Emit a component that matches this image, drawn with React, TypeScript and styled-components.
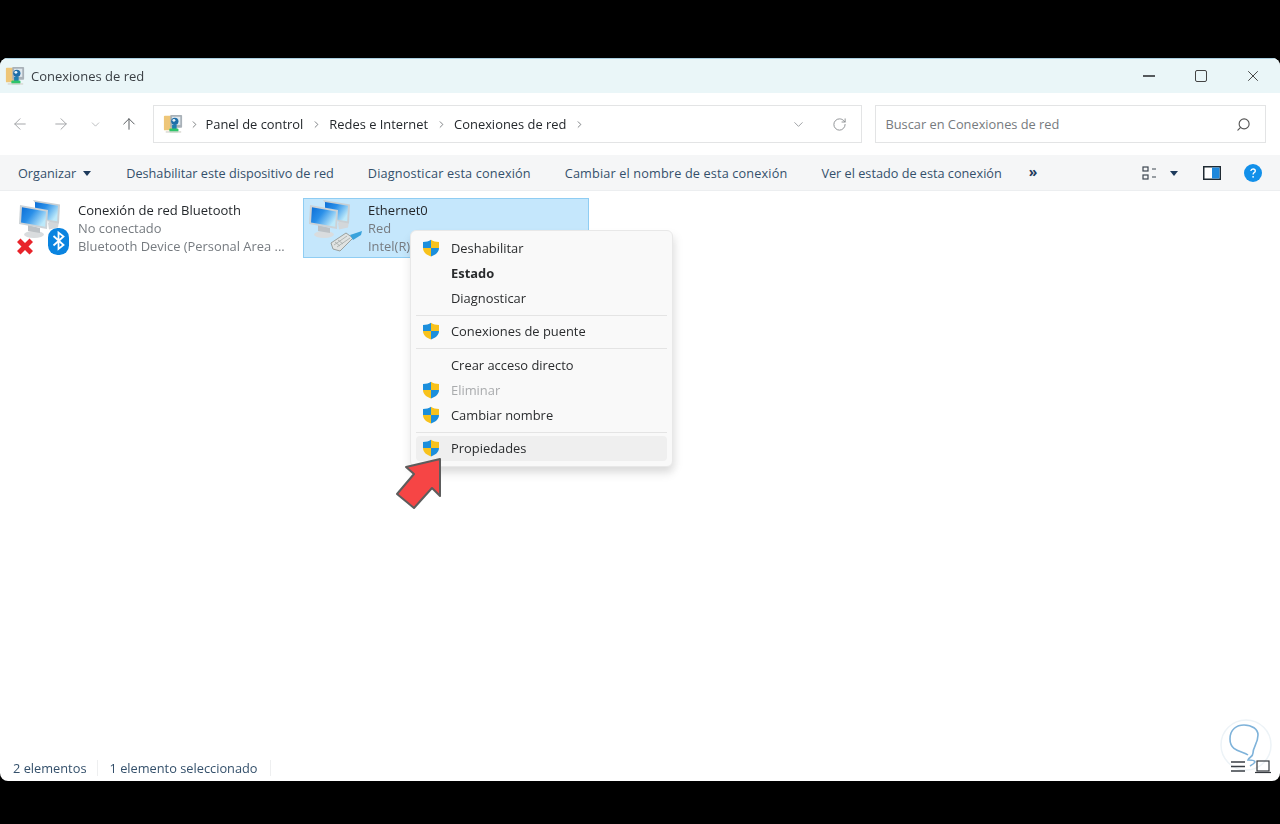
import React from "react";
import styled, { createGlobalStyle } from "styled-components";
import { ArrowLeft, ArrowRight, ArrowUp, ChevronDown, ChevronRight, RotateCw, Search, X } from "lucide-react";

const GlobalStyle = createGlobalStyle`
  html, body {
    margin: 0;
    background: #000;
  }
  * { box-sizing: border-box; }
`;

const FONT = `"Open Sans", "Noto Sans", "Liberation Sans", sans-serif`;

const ControlPanelIcon = () => (
  <svg width="20" height="20" viewBox="0 0 22 22">
    <rect x="1" y="2" width="10" height="16" rx="1" fill="#eec678" />
    <rect x="8" y="1" width="13" height="14" rx="1" fill="#a9b1b8" />
    <rect x="10" y="3" width="9" height="9" fill="#dfe8ee" />
    <circle cx="13" cy="8" r="4" fill="#1f6ea8" />
    <circle cx="12" cy="7" r="1.6" fill="#e8f3fa" />
    <rect x="10" y="12" width="5" height="5" fill="#1e7fb0" />
    <rect x="7" y="16" width="10" height="4" rx="1" fill="#2fc46a" />
    <rect x="3" y="19" width="17" height="1.5" fill="#d6d6d0" />
  </svg>
);

const Shield = () => (
  <svg width="18" height="18" viewBox="0 0 18 18">
    <defs>
      <clipPath id="shield-clip">
        <path d="M9 .8C11 2.4 14 3 17 3v6c0 4-3.4 6.9-8 8.4C4.400 15.900 1 13 1 9V3c3 0 6-.6 8-2.200z" />
      </clipPath>
    </defs>
    <g clipPath="url(#shield-clip)">
      <rect x="0" y="0" width="9" height="9" fill="#1c8fdc" />
      <rect x="9" y="0" width="9" height="9" fill="#f8c21c" />
      <rect x="0" y="9" width="9" height="9" fill="#f8c21c" />
      <rect x="9" y="9" width="9" height="9" fill="#1c8fdc" />
    </g>
  </svg>
);

// two monitors shared by both connection icons
const Monitors = () => (
  <>
    <defs>
      <linearGradient id="screen-grad" x1="0" y1="0" x2="1" y2="0.6">
        <stop offset="0" stopColor="#0b6ed6" />
        <stop offset="0.45" stopColor="#2a8fe8" />
        <stop offset="1" stopColor="#bde9fa" />
      </linearGradient>
    </defs>
    <path d="M34 24l3-3 8 1.500-1 6-9 2z" fill="#d3d7da" />
    <path d="M19 1l27 4.500-1 19-11-2z" fill="#c9cfd3" />
    <path d="M21 3l23 3.800-.8 15.400-22.200-3.500z" fill="url(#screen-grad)" />
    <ellipse cx="20" cy="35.500" rx="10" ry="3.500" fill="#d9dcde" />
    <path d="M14 26l12 3v5l-12-2z" fill="#bcc1c5" />
    <path d="M6 6l28 5-1 19L5 25z" fill="#ccd2d6" />
    <path d="M8 8.300l24 4.300-.8 15.200L7 23.500z" fill="url(#screen-grad)" />
  </>
);

const BluetoothNetIcon = () => (
  <svg width="60" height="60" viewBox="0 0 60 60">
    <Monitors />
    <path d="M3 43l3.500-3.500 4.500 4.500 4.500-4.500L19 43l-4.500 4.500L19 52l-3.500 3.500-4.500-4.500-4.500 4.500L3 52l4.500-4.500z" fill="#e8232a" />
    <rect x="34" y="29" width="21" height="27" rx="9.500" fill="#0a84e0" />
    <path d="M39.500 37l10 9-5 4V33.500l5 4-10 9" fill="none" stroke="#fff" strokeWidth="1.800" />
  </svg>
);

const EthernetNetIcon = () => (
  <svg width="60" height="60" viewBox="0 0 60 60">
    <Monitors />
    <path d="M27 44l15-10 7 5-13 13-7-2z" fill="#e0e3e2" stroke="#9aa09e" strokeWidth="1" />
    <path d="M30 46l13-9M33 48l13-9M34 41l5 4M31 43l5 4" stroke="#a3a9a7" strokeWidth=".8" />
    <path d="M46 36l12-4-1 4-8 5z" fill="#3aa3dc" />
  </svg>
);

const ViewIcon = () => (
  <svg width="16" height="16" viewBox="0 0 16 16" fill="none" stroke="#3d4650" strokeWidth="1.200">
    <rect x="1" y="2" width="5" height="4" />
    <rect x="1" y="10" width="5" height="4" />
    <path d="M10 4h4M10 12h4" />
  </svg>
);

const PaneIcon = () => (
  <svg width="18" height="14" viewBox="0 0 18 14">
    <rect x=".75" y=".75" width="16.500" height="12.500" fill="#fff" stroke="#1f2a33" strokeWidth="1.500" />
    <rect x="9" y="1.500" width="7.500" height="11" fill="#1e88dc" />
  </svg>
);

const HelpIcon = () => (
  <svg width="18" height="18" viewBox="0 0 18 18">
    <circle cx="9" cy="9" r="9" fill="#1290ea" />
    <path d="M6.800 7c.2-1.300 1.100-2 2.300-2 1.300 0 2.200.8 2.200 1.900 0 1.700-2.200 1.700-2.200 3.500" fill="none" stroke="#fff" strokeWidth="1.300" />
    <circle cx="9.100" cy="12.800" r=".9" fill="#fff" />
  </svg>
);

const MenuArrow = () => (
  <svg width="50" height="56" viewBox="0 0 50 56">
    <path
      d="M46 3L12 11l8 7L3 38l17 14 18-20 8 8z"
      fill="#f64545"
      stroke="#5d5d5d"
      strokeWidth="2"
      strokeLinejoin="round"
    />
  </svg>
);

const Watermark = () => (
  <svg width="60" height="62" viewBox="0 0 60 62" fill="none">
    <circle cx="27" cy="26" r="25" stroke="#edf3f7" strokeWidth="1.500" />
    <path
      d="M29 36C24 32 11 33 11 20C11 10 18 6 25 6C33 6 39 10 39 16C39 24 34 28 34 34C34 38 30 38 29 41C32 41 36 41 36 43C35 45 33 46 31 47"
      stroke="#7fb3da"
      strokeWidth="1.600"
    />
  </svg>
);

const LinesIcon = () => (
  <svg width="15" height="14" viewBox="0 0 15 14" stroke="#3a3f45" strokeWidth="1.300">
    <path d="M0 2h14M0 6.500h14M0 11h14" />
  </svg>
);

const TilesIcon = () => (
  <svg width="16" height="14" viewBox="0 0 16 14" fill="none" stroke="#33383d" strokeWidth="1.200">
    <rect x="2" y="1" width="12" height="10" />
    <path d="M0 12.500h16" />
  </svg>
);

const Page = styled.div`
  height: 824px;
  padding-top: 58px;
  background: #000;
  font-family: ${FONT};
  overflow: hidden;
`;

const Window = styled.div`
  position: relative;
  height: 723px;
  display: flex;
  flex-direction: column;
  background: #fff;
  border-radius: 8px;
  overflow: hidden;
  filter: blur(0.4px);
`;

const TitleBar = styled.div`
  height: 35px;
  flex: none;
  display: flex;
  align-items: center;
  padding: 0 1px 0 5px;
  background: #eaf6f8;
  border-top: 1px solid #a9cfe0;
`;

const TitleText = styled.span`
  margin-left: 6px;
  font-size: 13px;
  color: #3a3f44;
`;

const WindowControls = styled.div`
  margin-left: auto;
  display: flex;
  align-items: center;
`;

const ControlButton = styled.div`
  width: 52px;
  height: 34px;
  display: flex;
  align-items: center;
  justify-content: center;
  color: #444;
`;

const MinimizeGlyph = styled.span`
  width: 12px;
  height: 1.500px;
  background: #55595c;
`;

const MaximizeGlyph = styled.span`
  width: 12px;
  height: 12px;
  border: 1.500px solid #444;
  border-radius: 2px;
`;

const NavBar = styled.div`
  height: 62px;
  flex: none;
  display: flex;
  align-items: center;
  padding: 0 14px 0 11px;
`;

const NavButton = styled.div<{ $width: number; $color: string }>`
  width: ${(p) => p.$width}px;
  display: flex;
  justify-content: flex-start;
  color: ${(p) => p.$color};
`;

const FieldBox = styled.div`
  height: 38px;
  display: flex;
  align-items: center;
  background: #fff;
  border: 1.500px solid #e3e4e5;
`;

const AddressBox = styled(FieldBox)`
  width: 709px;
  margin-left: 6px;
  padding: 0 14px 0 8.500px;
`;

const SearchBox = styled(FieldBox)`
  width: 391px;
  margin-left: 13px;
  padding: 0 14px 0 9.500px;
  justify-content: space-between;
`;

const Crumb = styled.span`
  font-size: 12.900px;
  color: #24282c;
`;

const CrumbSep = styled.span<{ $width: number }>`
  width: ${(p) => p.$width}px;
  display: flex;
  justify-content: center;
  color: #54585c;
`;

const AddressActions = styled.div`
  margin-left: auto;
  display: flex;
  align-items: center;
  gap: 26px;
  color: #8a8d90;
`;

const SearchText = styled.span`
  font-size: 12.800px;
  color: #767a7e;
`;

const SearchGlyph = styled.span`
  display: flex;
  color: #555;
  transform: scaleX(-1);
`;

const ToolBar = styled.div`
  height: 36px;
  flex: none;
  display: flex;
  align-items: center;
  padding: 1px 18px 0;
  background: #f5f6f7;
  border-bottom: 1px solid #eceef0;
`;

const ToolItem = styled.span<{ $track?: number }>`
  font-size: 12.700px;
  letter-spacing: ${(p) => p.$track ?? 0}px;
  color: #34506b;
  white-space: nowrap;
  margin-right: 34px;
`;

const OrganizeItem = styled(ToolItem)`
  display: flex;
  align-items: center;
  gap: 7px;
  margin-right: 35px;
`;

const DropTriangle = styled.span`
  width: 0;
  height: 0;
  border-left: 4.500px solid transparent;
  border-right: 4.500px solid transparent;
  border-top: 5px solid #1d3a5c;
`;

const MoreItem = styled.span`
  font-size: 14px;
  font-weight: 700;
  line-height: 1;
  margin-left: -7px;
  margin-top: -3px;
  color: #1d3a5c;
`;

const ToolRight = styled.div`
  margin-left: auto;
  display: flex;
  align-items: center;
`;

const ViewGroup = styled.div`
  display: flex;
  align-items: center;
  gap: 12px;
  margin-right: 25px;
`;

const PaneGroup = styled.div`
  display: flex;
  margin-right: 23px;
`;

const Content = styled.div`
  flex: 1;
  display: flex;
  align-items: flex-start;
  gap: 4px;
  padding: 7px 0 0 13px;
`;

const Item = styled.div<{ $selected?: boolean }>`
  width: 286px;
  height: 60px;
  display: flex;
  background: ${(p) => (p.$selected ? "#c5e7fc" : "transparent")};
  border: 1px solid ${(p) => (p.$selected ? "#8fcdf3" : "transparent")};
`;

const ItemIcon = styled.div`
  width: 64px;
  flex: none;
  display: flex;
`;

const ItemText = styled.div`
  display: flex;
  flex-direction: column;
  padding-top: 2px;
`;

const ItemName = styled.span`
  font-size: 13px;
  line-height: 18px;
  color: #24282c;
`;

const ItemMeta = styled.span`
  font-size: 12.900px;
  line-height: 18px;
  color: #767b80;
  white-space: nowrap;
`;

const StatusBar = styled.div`
  height: 24px;
  flex: none;
  display: flex;
  align-items: center;
  padding: 0 0 2px 13px;
`;

const StatusText = styled.span`
  font-size: 12.800px;
  color: #34506b;
`;

const StatusSep = styled.span<{ $gap: number }>`
  width: 1px;
  height: 16px;
  background: #eeeff0;
  margin: 0 ${(p) => p.$gap}px;
`;

const StatusIcons = styled.div`
  position: absolute;
  right: 9px;
  bottom: 7px;
  display: flex;
  gap: 9px;
`;

const WatermarkSpot = styled.div`
  position: absolute;
  right: 1px;
  bottom: 0;
  display: flex;
`;

const Menu = styled.div`
  position: absolute;
  left: 410px;
  top: 172px;
  width: 263px;
  padding: 5px;
  background: #f9f9f9;
  border: 1px solid #e8e8e8;
  border-radius: 6px;
  box-shadow: 0 7px 10px rgba(0, 0, 0, 0.1), 4px 4px 8px rgba(0, 0, 0, 0.05);
`;

const MenuRow = styled.div<{ $active?: boolean; $disabled?: boolean; $bold?: boolean }>`
  height: 25px;
  display: flex;
  align-items: center;
  padding-bottom: 2px;
  border-radius: 4px;
  font-size: 12.900px;
  font-weight: ${(p) => (p.$bold ? 700 : 400)};
  color: ${(p) => (p.$disabled ? "#a9abad" : "#2a2c2e")};
  background: ${(p) => (p.$active ? "#efefef" : "transparent")};
`;

const MenuIcon = styled.span`
  width: 35px;
  flex: none;
  display: flex;
  padding-left: 6px;
`;

const MenuLine = styled.div<{ $below: number }>`
  height: 1px;
  margin: 4px 0 ${(p) => p.$below}px;
  background: #e4e4e4;
`;

const ArrowSpot = styled.div`
  position: absolute;
  left: 394px;
  top: 398px;
  display: flex;
`;

type MenuEntry = {
  label?: string;
  shield?: boolean;
  bold?: boolean;
  disabled?: boolean;
  active?: boolean;
  lineBelow?: number;
};

const MENU: MenuEntry[] = [
  { label: "Deshabilitar", shield: true },
  { label: "Estado", bold: true },
  { label: "Diagnosticar" },
  { lineBelow: 3 },
  { label: "Conexiones de puente", shield: true },
  { lineBelow: 4 },
  { label: "Crear acceso directo" },
  { label: "Eliminar", shield: true, disabled: true },
  { label: "Cambiar nombre", shield: true },
  { lineBelow: 3 },
  { label: "Propiedades", shield: true, active: true },
];

const Crumbs = ["Panel de control", "Redes e Internet", "Conexiones de red"];

const App: React.FC = () => {
  return (
    <Page>
      <GlobalStyle />
      <Window>
        <TitleBar>
          <ControlPanelIcon />
          <TitleText>Conexiones de red</TitleText>
          <WindowControls>
            <ControlButton><MinimizeGlyph /></ControlButton>
            <ControlButton><MaximizeGlyph /></ControlButton>
            <ControlButton><X size={18} strokeWidth={1.3} /></ControlButton>
          </WindowControls>
        </TitleBar>

        <NavBar>
          <NavButton $width={41} $color="#a2a5a8"><ArrowLeft size={18} strokeWidth={1.3} /></NavButton>
          <NavButton $width={37} $color="#a2a5a8"><ArrowRight size={18} strokeWidth={1.3} /></NavButton>
          <NavButton $width={31} $color="#a2a5a8"><ChevronDown size={13} strokeWidth={1.3} /></NavButton>
          <NavButton $width={27} $color="#55595d"><ArrowUp size={18} strokeWidth={1.3} /></NavButton>
          <AddressBox>
            <ControlPanelIcon />
            <CrumbSep $width={23}><ChevronRight size={11} strokeWidth={1.6} /></CrumbSep>
            {Crumbs.map((crumb) => (
              <React.Fragment key={crumb}>
                <Crumb>{crumb}</Crumb>
                <CrumbSep $width={26}><ChevronRight size={11} strokeWidth={1.6} /></CrumbSep>
              </React.Fragment>
            ))}
            <AddressActions>
              <ChevronDown size={15} strokeWidth={1.3} />
              <RotateCw size={15} strokeWidth={1.5} />
            </AddressActions>
          </AddressBox>
          <SearchBox>
            <SearchText>Buscar en Conexiones de red</SearchText>
            <SearchGlyph><Search size={15} strokeWidth={1.8} /></SearchGlyph>
          </SearchBox>
        </NavBar>

        <ToolBar>
          <OrganizeItem>Organizar <DropTriangle /></OrganizeItem>
          <ToolItem>Deshabilitar este dispositivo de red</ToolItem>
          <ToolItem $track={0.15}>Diagnosticar esta conexión</ToolItem>
          <ToolItem $track={0.15}>Cambiar el nombre de esta conexión</ToolItem>
          <ToolItem>Ver el estado de esta conexión</ToolItem>
          <MoreItem>»</MoreItem>
          <ToolRight>
            <ViewGroup>
              <ViewIcon />
              <DropTriangle />
            </ViewGroup>
            <PaneGroup><PaneIcon /></PaneGroup>
            <HelpIcon />
          </ToolRight>
        </ToolBar>

        <Content>
          <Item>
            <ItemIcon><BluetoothNetIcon /></ItemIcon>
            <ItemText>
              <ItemName>Conexión de red Bluetooth</ItemName>
              <ItemMeta>No conectado</ItemMeta>
              <ItemMeta>Bluetooth Device (Personal Area ...</ItemMeta>
            </ItemText>
          </Item>
          <Item $selected>
            <ItemIcon><EthernetNetIcon /></ItemIcon>
            <ItemText>
              <ItemName>Ethernet0</ItemName>
              <ItemMeta>Red</ItemMeta>
              <ItemMeta>Intel(R)</ItemMeta>
            </ItemText>
          </Item>
        </Content>

        <StatusBar>
          <StatusText>2 elementos</StatusText>
          <StatusSep $gap={11} />
          <StatusText>1 elemento seleccionado</StatusText>
          <StatusSep $gap={12} />
        </StatusBar>

        <WatermarkSpot><Watermark /></WatermarkSpot>
        <StatusIcons>
          <LinesIcon />
          <TilesIcon />
        </StatusIcons>

        <Menu>
          {MENU.map((entry, i) =>
            entry.lineBelow ? (
              <MenuLine key={i} $below={entry.lineBelow} />
            ) : (
              <MenuRow key={i} $active={entry.active} $disabled={entry.disabled} $bold={entry.bold}>
                <MenuIcon>{entry.shield && <Shield />}</MenuIcon>
                {entry.label}
              </MenuRow>
            )
          )}
        </Menu>
        <ArrowSpot><MenuArrow /></ArrowSpot>
      </Window>
    </Page>
  );
};

export default App;
